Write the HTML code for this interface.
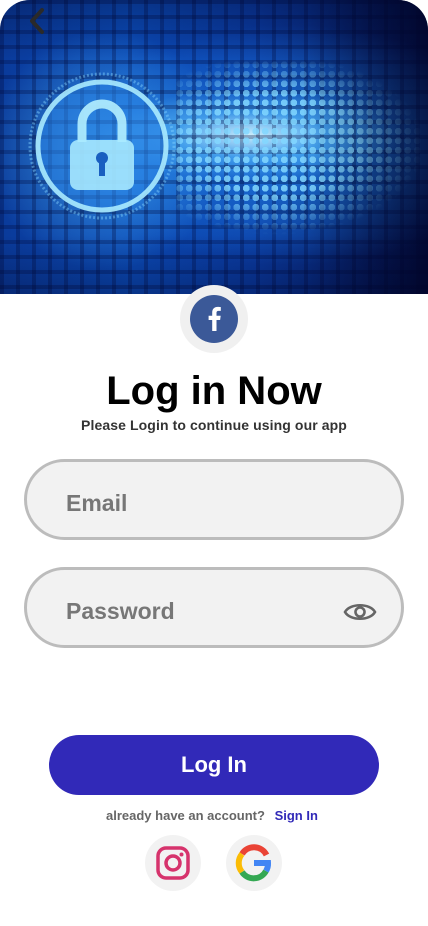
<!DOCTYPE html>
<html><head><meta charset="utf-8"><style>
*{margin:0;padding:0;box-sizing:border-box}
body{width:428px;height:926px;background:#fff;font-family:"Liberation Sans",Arial,sans-serif;position:relative;overflow:hidden}
.hero{position:absolute;left:0;top:0;width:428px;height:294px;border-radius:30px 30px 0 0;overflow:hidden;
background:
radial-gradient(ellipse 150px 45px at 250px 135px, rgba(220,250,255,.9), rgba(100,200,255,.5) 50%, transparent 100%),
radial-gradient(ellipse 230px 120px at 290px 145px, rgba(40,150,255,.75), transparent 100%),
radial-gradient(circle 120px at 105px 150px, rgba(90,200,255,.6), transparent 100%),
linear-gradient(90deg,#0a3a9a 0%,#0b4bb8 30%,#0a3aa0 60%,#04124a 100%);}
.grid{position:absolute;inset:0;background-image:linear-gradient(90deg,rgba(0,10,60,.3) 4px,transparent 4px),linear-gradient(rgba(0,10,60,.3) 4px,transparent 4px);background-size:16px 15px;}
.dots{position:absolute;left:175px;top:60px;width:253px;height:185px;background-image:radial-gradient(circle 3.5px,rgba(130,215,255,.85) 95%,transparent 100%);background-size:9.5px 9.5px;
-webkit-mask:radial-gradient(ellipse 150px 90px at 100px 85px,#000 55%,transparent 100%);mask:radial-gradient(ellipse 150px 90px at 100px 85px,#000 55%,transparent 100%)}
.dark{position:absolute;inset:0;background:linear-gradient(180deg,rgba(0,0,30,.3),transparent 20%,transparent 80%,rgba(0,0,30,.3)),linear-gradient(90deg,transparent 72%,rgba(0,0,30,.5))}
.fb{position:absolute;left:180px;top:285px;width:68px;height:68px;border-radius:50%;background:#f0f0f0}
.fb div{position:absolute;left:10px;top:10px;width:48px;height:48px;border-radius:50%;background:#3b5998}
h1{position:absolute;top:369px;width:100%;text-align:center;font-size:40px;font-weight:bold;color:#000}
.sub{position:absolute;top:417px;width:100%;text-align:center;font-size:14px;font-weight:bold;color:#333;letter-spacing:.1px}
.field{position:absolute;left:24px;width:380px;height:81px;border:3px solid #bcbcbc;border-radius:41px;background:#f2f2f2;font-size:23px;font-weight:bold;color:#777;padding-left:39px;line-height:83px}
.btn{position:absolute;left:49px;top:735px;width:330px;height:60px;border-radius:30px;background:#3129b8;color:#fff;text-align:center;line-height:60px;font-size:22px;font-weight:bold}
.acc{position:absolute;top:808px;left:106px;font-size:13px;font-weight:bold;color:#666}
.acc b{color:#3129b8;margin-left:6px}
.soc{position:absolute;top:835px;width:56px;height:56px;border-radius:50%;background:#f2f2f2}
</style></head><body>
<div class="hero"><div class="grid"></div><div class="dots"></div><div class="dark"></div>
<svg style="position:absolute;left:0;top:0" width="428" height="294">
<circle cx="102" cy="146" r="64" fill="rgba(40,130,230,.55)" stroke="rgba(170,235,255,.9)" stroke-width="5"/>
<circle cx="102" cy="146" r="72" fill="none" stroke="rgba(130,210,255,.45)" stroke-width="3" stroke-dasharray="2 2"/>
<path d="M82 142v-18a20 20 0 0 1 40 0v18" fill="none" stroke="rgba(180,240,255,.9)" stroke-width="9"/>
<rect x="70" y="140" width="64" height="50" rx="8" fill="rgba(170,235,255,.88)"/>
<circle cx="102" cy="158" r="6" fill="#1a5fc0"/><rect x="99" y="159" width="6" height="17" fill="#1a5fc0"/>
<path d="M42 10 L32 21 L42 32" fill="none" stroke="#2a2a2a" stroke-width="4" stroke-linecap="round" stroke-linejoin="round"/>
</svg></div>
<div class="fb"><div><svg width="48" height="48" viewBox="0 0 48 48"><path d="M26.5 36V25h3.6l.6-4.3h-4.2V18c0-1.2.4-2.1 2.1-2.1h2.2v-3.8c-.4 0-1.7-.2-3.2-.2-3.2 0-5.4 2-5.4 5.6v3.2h-3.6V25h3.6v11z" fill="#fff"/></svg></div></div>
<h1>Log in Now</h1>
<div class="sub">Please Login to continue using our app</div>
<div class="field" style="top:459px">Email</div>
<div class="field" style="top:567px">Password
<svg style="position:absolute;right:24px;top:29px" width="34" height="26" viewBox="0 0 34 26"><path d="M2 13C7 4 27 4 32 13C27 22 7 22 2 13Z" fill="none" stroke="#666" stroke-width="2.6"/><circle cx="17" cy="13" r="4.5" fill="none" stroke="#666" stroke-width="2.6"/></svg></div>
<div class="btn">Log In</div>
<div class="acc">already have an account? <b>Sign In</b></div>
<div class="soc" style="left:145px"><svg width="56" height="56"><rect x="13" y="13" width="30" height="30" rx="8" fill="none" stroke="#d6336c" stroke-width="3.5"/><circle cx="28" cy="28" r="7" fill="none" stroke="#d6336c" stroke-width="3.5"/><circle cx="36.5" cy="19.5" r="2" fill="#d6336c"/></svg></div>
<div class="soc" style="left:226px"><svg width="56" height="56" viewBox="0 0 56 56">
<path d="M40.5 20A14 14 0 0 0 16 19" fill="none" stroke="#ea4335" stroke-width="6"/>
<path d="M16 19A14 14 0 0 0 16 37" fill="none" stroke="#fbbc05" stroke-width="6"/>
<path d="M16 37A14 14 0 0 0 40 36" fill="none" stroke="#34a853" stroke-width="6"/>
<path d="M40 36A14 14 0 0 0 42 28H28" fill="none" stroke="#4285f4" stroke-width="6"/>
</svg></div>
</body></html>
